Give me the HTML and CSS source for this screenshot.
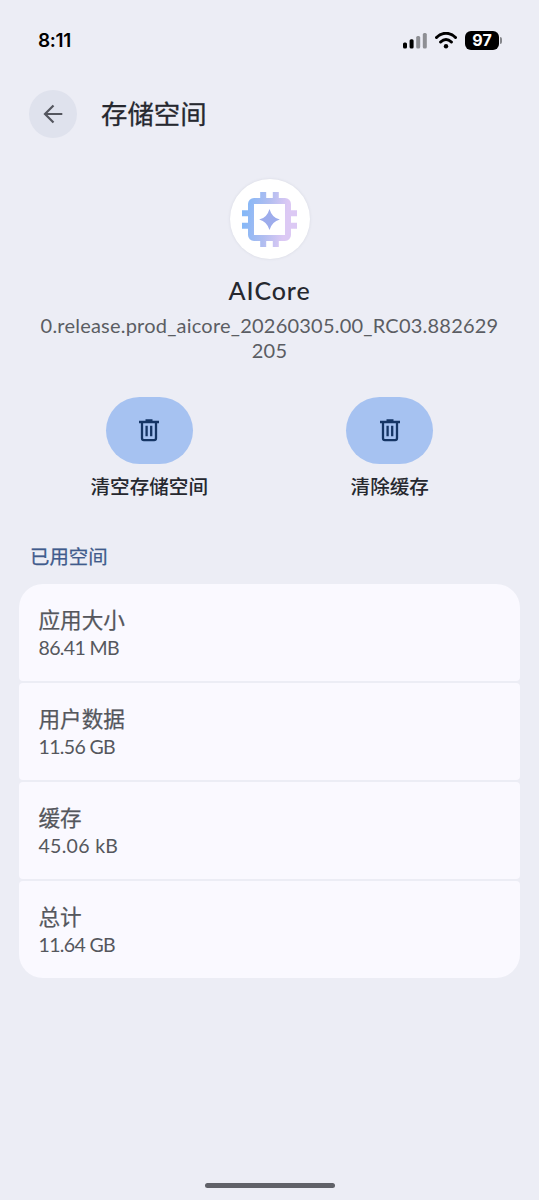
FILE: index.html
```html
<!DOCTYPE html>
<html lang="zh-CN">
<head>
<meta charset="utf-8">
<title>存储空间</title>
<link rel="stylesheet" href="styles.css">
</head>
<body>
<div class="screen">
  <header class="status">
    <span class="time">8:11</span>
    <div class="indicators">
      <svg class="signal" width="24" height="17" viewBox="0 0 24 17">
        <rect x="0" y="10.5" width="4" height="6" rx="1.5"/>
        <rect x="6.6" y="7.2" width="4" height="9.300" rx="1.5"/>
        <rect class="dim" x="13.2" y="4" width="4" height="12.5" rx="1.5"/>
        <rect class="dim" x="19.8" y="1" width="4" height="15.5" rx="1.5"/>
      </svg>
      <svg class="wifi" width="22" height="17" viewBox="0 0 22 17">
        <path d="M1.5 5.5C7-.1 15-.1 20.500 5.500M5.600 10C9 6.800 13 6.800 16.400 10"/>
        <circle cx="11" cy="14.200" r="2.200"/>
      </svg>
      <div class="battery"><span class="level">97</span><i class="cap"></i></div>
    </div>
  </header>

  <nav class="toolbar">
    <button class="back" aria-label="返回">
      <svg width="20" height="20" viewBox="0 0 20 20"><path d="M19.300 10H2.200M10.500 1.500 2 10l8.500 8.500"/></svg>
    </button>
    <h1 class="title">存储空间</h1>
  </nav>

  <section class="app">
    <div class="app-icon">
      <svg width="55" height="55" viewBox="0 0 55 55">
        <defs><linearGradient id="chip" x1="0" y1="0" x2="55" y2="8" gradientUnits="userSpaceOnUse">
          <stop offset=".1" stop-color="#86b8f7"/><stop offset=".5" stop-color="#b0bdf0"/><stop offset=".85" stop-color="#dcc9f4"/>
        </linearGradient></defs>
        <path fill="url(#chip)" fill-rule="evenodd" d="M18.200 0h6v6h6.600V0h6v6H43a6 6 0 0 1 6 6v6.200h6v6h-6v6.600h6v6h-6V43a6 6 0 0 1-6 6h-6.200v6h-6v-6h-6.600v6h-6v-6H12a6 6 0 0 1-6-6v-6.200H0v-6h6v-6.600H0v-6h6V12a6 6 0 0 1 6-6h6.200zM12 12v31h31V12z"/>
        <path fill="#9dacec" d="M27.500 17Q30 26 37.800 27.500 30 29.500 27.500 38 25 29.500 17.200 27.500 25 26 27.500 17z"/>
      </svg>
    </div>
    <h2 class="app-name">AICore</h2>
    <p class="version">0.release.prod_aicore_20260305.00_RC03.882629<br>205</p>
  </section>

  <section class="actions">
    <div class="action">
      <button class="pill" aria-label="清空存储空间">
        <svg class="trash" width="20" height="23" viewBox="0 0 20 23"><path d="M0 3h20M3 3v16.300q0 1.900 1.900 1.900h10.200q1.900 0 1.900-1.900V3M6.500 1.300h7M7.600 6.700v10.500M12.200 6.700v10.500"/></svg>
      </button>
      <span class="action-label">清空存储空间</span>
    </div>
    <div class="action">
      <button class="pill" aria-label="清除缓存">
        <svg class="trash" width="20" height="23" viewBox="0 0 20 23"><path d="M0 3h20M3 3v16.300q0 1.900 1.900 1.900h10.200q1.900 0 1.900-1.900V3M6.500 1.300h7M7.600 6.700v10.500M12.200 6.700v10.500"/></svg>
      </button>
      <span class="action-label">清除缓存</span>
    </div>
  </section>

  <h3 class="section-title">已用空间</h3>
  <ul class="list">
    <li class="row"><span class="row-name">应用大小</span><span class="row-value tight">86.41 MB</span></li>
    <li class="row"><span class="row-name">用户数据</span><span class="row-value tight">11.56 GB</span></li>
    <li class="row"><span class="row-name">缓存</span><span class="row-value loose">45.06 kB</span></li>
    <li class="row"><span class="row-name">总计</span><span class="row-value tight">11.64 GB</span></li>
  </ul>
  <div class="home-bar"></div>
</div>
</body>
</html>
```
FILE: styles.css
```css
* { box-sizing: border-box; }
body {
  margin: 0;
  background: #ecedf5;
  color: #26282f;
  font-family: Lato, "Noto Sans CJK SC", sans-serif;
}
h1, h2, h3, p, ul { margin: 0; padding: 0; font-weight: 400; }
button { border: 0; padding: 0; }
svg { display: block; }
.screen {
  height: 1200px;
  display: flex;
  flex-direction: column;
}
.status {
  height: 80px;
  padding: 0 37px 0 38px;
  display: flex;
  align-items: center;
  justify-content: space-between;
  color: #000;
}
.time { padding-top: 2px; font: 600 19px/24px Inter, sans-serif; letter-spacing: -0.3px; }
.indicators { display: flex; align-items: center; gap: 8px; }
.signal .dim { fill: #8e8f94; }
.wifi path { fill: none; stroke: #000; stroke-width: 3; stroke-linecap: round; }
.battery { display: flex; align-items: center; gap: 1px; }
.level {
  width: 34px;
  height: 19px;
  border-radius: 6px;
  background: #000;
  color: #fff;
  font: 700 16px/19px Inter, sans-serif;
  text-align: center;
}
.cap { width: 2px; height: 7px; border-radius: 0 2px 2px 0; background: #85868b; }
.toolbar {
  height: 67px;
  padding: 0 29px;
  display: flex;
  align-items: center;
  gap: 24px;
}
.back {
  width: 48px;
  height: 48px;
  border-radius: 50%;
  background: #dfe2ed;
  display: grid;
  place-items: center;
}
.back path { fill: none; stroke: #54565e; stroke-width: 2.200; }
.title {
  font-size: 26.4px;
  line-height: 36px;
  -webkit-text-stroke: 0.3px currentColor;
}
.app {
  padding-top: 32px;
  display: flex;
  flex-direction: column;
  align-items: center;
}
.app-icon {
  width: 80px;
  height: 80px;
  border-radius: 50%;
  background: #fff;
  box-shadow: 0 0 3px #d6d8e2;
  display: grid;
  place-items: center;
}
.app-name {
  margin-top: 13px;
  font: 500 25px/36px Lato, sans-serif;
  letter-spacing: 0.9px;
}
.version {
  margin-top: 5px;
  color: #5b5d63;
  font-size: 20px;
  line-height: 25px;
  letter-spacing: 0.22px;
  text-align: center;
}
.actions {
  margin-top: 34px;
  padding: 0 29px;
  display: grid;
  grid-template-columns: 1fr 1fr;
}
.action { display: flex; flex-direction: column; align-items: center; }
.pill {
  width: 87px;
  height: 67px;
  border-radius: 34px;
  background: #a6c2f1;
  display: grid;
  place-items: center;
}
.trash path { fill: none; stroke: #153565; stroke-width: 2.300; }
.action-label {
  margin-top: 9px;
  font-size: 19.6px;
  line-height: 28px;
  font-weight: 500;
}
.section-title {
  margin: 43px 0 0 30px;
  color: #405b8c;
  font-size: 19.4px;
  line-height: 26px;
  -webkit-text-stroke: 0.25px currentColor;
}
.list {
  margin: 14px 19px 0;
  border-radius: 24px;
  overflow: hidden;
  list-style: none;
  display: grid;
  gap: 2px;
}
.row {
  height: 97px;
  padding: 21px 19.500px 0;
  border-radius: 4px;
  background: #faf9ff;
  color: #55575d;
  display: flex;
  flex-direction: column;
}
.row-name {
  font-size: 21.6px;
  line-height: 30px;
  -webkit-text-stroke: 0.25px currentColor;
}
.row-value { font-size: 19.5px; line-height: 26px; }
.tight { letter-spacing: -0.65px; }
.loose { letter-spacing: 0.3px; }
.home-bar {
  width: 130px;
  height: 5px;
  margin: auto auto 12px;
  border-radius: 3px;
  background: #606168;
}
```
